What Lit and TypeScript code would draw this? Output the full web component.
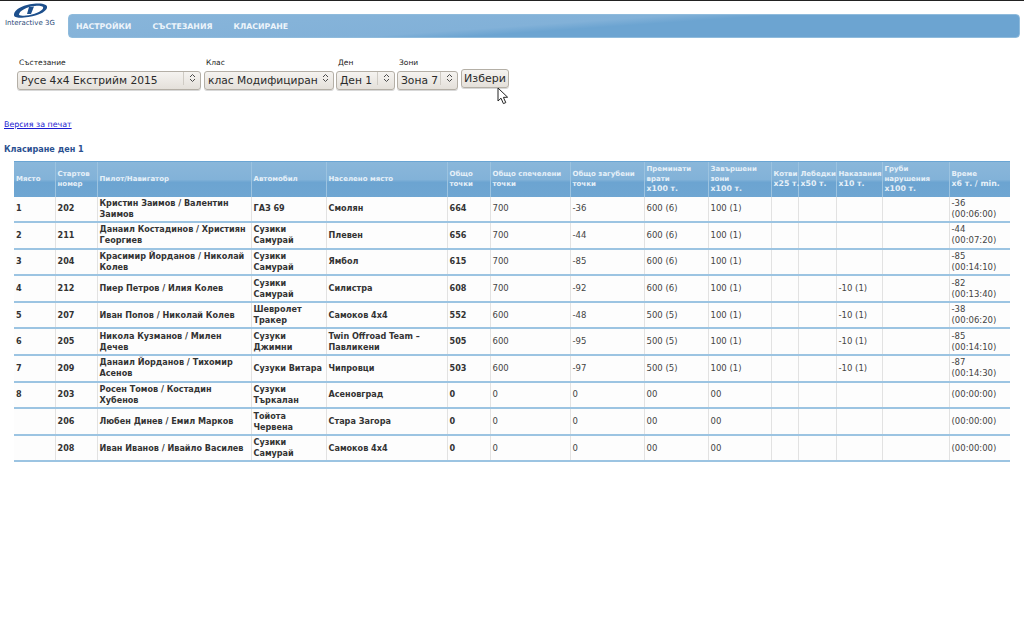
import { html, css, svg, LitElement } from 'lit';
import { customElement } from 'lit/decorators.js';

const colWidths = [41, 42, 154, 75, 121, 43, 80, 74, 64, 63, 27, 38, 46, 67, 61];

const headers = [
  ['Място'],
  ['Стартов', 'номер'],
  ['Пилот/Навигатор'],
  ['Автомобил'],
  ['Населено място'],
  ['Общо', 'точки'],
  ['Общо спечелени', 'точки'],
  ['Общо загубени', 'точки'],
  ['Преминати', 'врати', 'x100 т.'],
  ['Завършени', 'зони', 'x100 т.'],
  ['Котви', 'x25 т.'],
  ['Лебедки', 'x50 т.'],
  ['Наказания', 'x10 т.'],
  ['Груби', 'нарушения', 'x100 т.'],
  ['Време', 'x6 т. / min.'],
];

const rows = [
  ['1', '202', 'Кристин Заимов / Валентин Заимов', 'ГАЗ 69', 'Смолян', '664', '700', '-36', '600 (6)', '100 (1)', '', '', '', '', '-36 (00:06:00)'],
  ['2', '211', 'Данаил Костадинов / Християн Георгиев', 'Сузики Самурай', 'Плевен', '656', '700', '-44', '600 (6)', '100 (1)', '', '', '', '', '-44 (00:07:20)'],
  ['3', '204', 'Красимир Йорданов / Николай Колев', 'Сузики Самурай', 'Ямбол', '615', '700', '-85', '600 (6)', '100 (1)', '', '', '', '', '-85 (00:14:10)'],
  ['4', '212', 'Пиер Петров / Илия Колев', 'Сузики Самурай', 'Силистра', '608', '700', '-92', '600 (6)', '100 (1)', '', '', '-10 (1)', '', '-82 (00:13:40)'],
  ['5', '207', 'Иван Попов / Николай Колев', 'Шевролет Тракер', 'Самоков 4х4', '552', '600', '-48', '500 (5)', '100 (1)', '', '', '-10 (1)', '', '-38 (00:06:20)'],
  ['6', '205', 'Никола Кузманов / Милен Дечев', 'Сузуки Джимни', 'Twin Offroad Team – Павликени', '505', '600', '-95', '500 (5)', '100 (1)', '', '', '-10 (1)', '', '-85 (00:14:10)'],
  ['7', '209', 'Данаил Йорданов / Тихомир Асенов', 'Сузуки Витара', 'Чипровци', '503', '600', '-97', '500 (5)', '100 (1)', '', '', '-10 (1)', '', '-87 (00:14:30)'],
  ['8', '203', 'Росен Томов / Костадин Хубенов', 'Сузуки Търкалан', 'Асеновград', '0', '0', '0', '00', '00', '', '', '', '', '(00:00:00)'],
  ['', '206', 'Любен Динев / Емил Марков', 'Тойота Червена', 'Стара Загора', '0', '0', '0', '00', '00', '', '', '', '', '(00:00:00)'],
  ['', '208', 'Иван Иванов / Ивайло Василев', 'Сузики Самурай', 'Самоков 4х4', '0', '0', '0', '00', '00', '', '', '', '', '(00:00:00)'],
];

// these columns are bold in the body of the table
const boldCols = new Set([0, 1, 2, 3, 4, 5]);

const filters = [
  { label: 'Състезание', value: 'Русе 4x4 Екстрийм 2015', width: 184, divider: true },
  { label: 'Клас', value: 'клас Модифициран', width: 130, divider: false },
  { label: 'Ден', value: 'Ден 1', width: 59, divider: true },
  { label: 'Зони', value: 'Зона 7', width: 61, divider: true },
];

const updown = svg`<svg class="updown" width="7" height="10" viewBox="0 0 7 10">
  <path d="M1 4 L3.5 1.5 L6 4 M1 6 L3.5 8.5 L6 6" fill="none" stroke="#4a4a4a" stroke-width="1"/>
</svg>`;

@customElement('app-root')
export class AppRoot extends LitElement {
  static styles = css`
    :host {
      display: block;
      width: 1024px;
      height: 640px;
      overflow: hidden;
      position: relative;
      background: #fff;
      font-family: 'DejaVu Sans', sans-serif;
      color: #222;
    }
    .topline {
      height: 1px;
      background: #222;
    }
    .head {
      display: flex;
      align-items: flex-start;
      height: 40px;
    }
    .logo {
      width: 68px;
      flex: none;
      display: flex;
      flex-direction: column;
      align-items: flex-start;
    }
    .logo svg {
      display: block;
      overflow: visible;
      margin-left: 5px;
    }
    .logo span {
      font-size: 7px;
      line-height: 8px;
      margin: 1px 0 0 5px;
      color: #2c4a78;
      white-space: nowrap;
    }
    .nav {
      margin-top: 13px;
      width: 952px;
      height: 24px;
      box-sizing: border-box;
      display: flex;
      align-items: center;
      gap: 21px;
      padding: 0 7px;
      border-radius: 4px;
      border: 1px solid #8fbbdc;
      background: linear-gradient(176deg, #88b5da 0%, #82b1d8 48%, #6ca4d1 56%, #6ca4d1 100%);
    }
    .nav a {
      color: #eef5fb;
      font-size: 7.8px;
      font-weight: bold;
      white-space: nowrap;
    }
    .filters {
      display: flex;
      align-items: flex-end;
      gap: 2px;
      margin: 16px 0 0 17px;
    }
    .field {
      display: flex;
      flex-direction: column;
    }
    .field:first-child {
      margin-right: 1px;
    }
    .field label {
      font-size: 7.5px;
      line-height: 12px;
      margin-left: 2px;
      color: #222;
    }
    .select {
      position: relative;
      height: 19px;
    }
    select,
    button {
      appearance: none;
      width: 100%;
      height: 19px;
      margin: 0;
      box-sizing: border-box;
      border: 1px solid #b4afa6;
      border-radius: 3px;
      background: linear-gradient(#f5f3f0, #e4e0da);
      box-shadow: 0 1px 0 #d8d8d8;
      font-family: 'DejaVu Sans', sans-serif;
      font-size: 10.7px;
      color: #2a2a2a;
      padding: 0 0 0 3px;
    }
    button {
      width: 48px;
      margin-left: 1px;
      padding: 0;
      font-size: 11px;
    }
    .updown {
      position: absolute;
      right: 5px;
      top: 4px;
    }
    .divider {
      position: absolute;
      right: 17px;
      top: 3px;
      width: 1px;
      height: 13px;
      background: #cfcbc4;
    }
    .print {
      display: block;
      margin: 32px 0 0 4px;
      font-size: 7.9px;
      line-height: 10px;
      color: #1a1ad0;
      text-decoration: underline;
    }
    h1 {
      margin: 14px 0 0 4px;
      font-size: 8.1px;
      line-height: 10px;
      font-weight: bold;
      color: #2b5090;
    }
    table {
      margin: 7px 0 0 14px;
      width: 996px;
      table-layout: fixed;
      border-collapse: collapse;
      font-size: 8.5px;
    }
    thead tr {
      height: 35px;
      background: linear-gradient(#8ab7da 0%, #82b2d8 50%, #6ca4d1 58%, #6fa6d2 100%);
    }
    th {
      padding: 0 2px;
      text-align: left;
      font-size: 7px;
      line-height: 10px;
      font-weight: bold;
      color: #e6f0f8;
      border-left: 1px solid #9cc3e0;
      border-top: 1px solid #6aa5d3;
      white-space: nowrap;
    }
    th:first-child {
      border-left: 0;
    }
    th span {
      display: block;
    }
    th span.unit {
      font-size: 7.8px;
    }
    td {
      height: 24.6px;
      padding: 0 2px;
      line-height: 11px;
      border-bottom: 2px solid #9cc4e2;
      border-left: 1px solid #e2e2e2;
      background: #fdfdfd;
      color: #444;
    }
    td:first-child {
      border-left: 0;
    }
    td.bold {
      font-size: 8.1px;
      font-weight: bold;
      color: #333;
    }
    .cursor {
      position: absolute;
      left: 497px;
      top: 87px;
    }
  `;

  private renderFilter(f: (typeof filters)[number]) {
    return html`<div class="field" style="width:${f.width}px">
      <label>${f.label}</label>
      <div class="select">
        <select><option>${f.value}</option></select>
        ${f.divider ? html`<i class="divider"></i>` : ''} ${updown}
      </div>
    </div>`;
  }

  protected render() {
    return html`
      <div class="topline"></div>
      <header class="head">
        <div class="logo">
          <svg width="50" height="17" viewBox="5 1 50 17">
            <path
              fill-rule="evenodd"
              fill="#1d4f8c"
              d="M14 15 C14 9 25 4 36 3.5 C43 3 48 4.5 47 8 C46 12 36 17 24 17.5 C18 18 14 17.5 14 15 Z
                 M19 14.5 C19 11 27 6.5 35 6 C41 5.5 44 6.5 43 8.5 C42 11 34 15 26 15.5 C21 16 19 15.5 19 14.5 Z"
            />
            <path d="M29 7 L34 6.5 L31 14 L27 14 Z" fill="#1d4f8c" />
          </svg>
          <span>Interactive 3G</span>
        </div>
        <nav class="nav">
          <a>НАСТРОЙКИ</a>
          <a>СЪСТЕЗАНИЯ</a>
          <a>КЛАСИРАНЕ</a>
        </nav>
      </header>
      <form class="filters">
        ${filters.map(f => this.renderFilter(f))}
        <button type="button">Избери</button>
      </form>
      <a class="print" href="#">Версия за печат</a>
      <h1>Класиране ден 1</h1>
      <table>
        <colgroup>
          ${colWidths.map(w => html`<col style="width:${w}px" />`)}
        </colgroup>
        <thead>
          <tr>
            ${headers.map(
              lines =>
                html`<th>
                  ${lines.map(
                    l => html`<span class=${l.startsWith('x') ? 'unit' : ''}>${l}</span>`
                  )}
                </th>`
            )}
          </tr>
        </thead>
        <tbody>
          ${rows.map(
            row => html`<tr>
              ${row.map(
                (cell, i) =>
                  html`<td class=${boldCols.has(i) ? 'bold' : ''}>${cell}</td>`
              )}
            </tr>`
          )}
        </tbody>
      </table>
      <svg class="cursor" width="13" height="18" viewBox="0 0 13 18">
        <path d="M1 1 L1 14 L4 11.2 L6.4 16.6 L8.8 15.6 L6.4 10.4 L10.6 10.2 Z" fill="#fff" stroke="#222" stroke-width="1"/>
      </svg>
    `;
  }
}
